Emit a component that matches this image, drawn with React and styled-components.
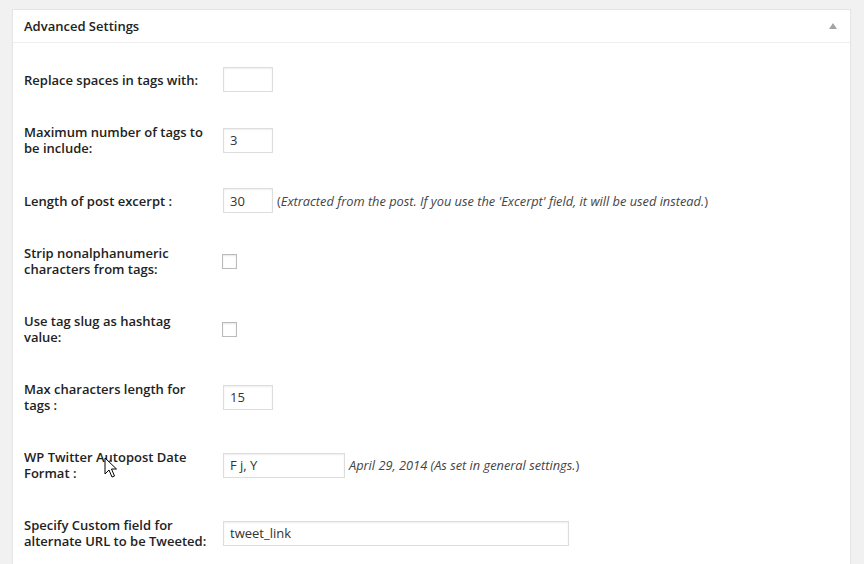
import React from "react";
import styled, { createGlobalStyle } from "styled-components";

const GlobalStyle = createGlobalStyle`
  html, body {
    margin: 0;
    padding: 0;
    background: #f1f1f1;
    font-family: "Open Sans", "Liberation Sans", sans-serif;
    color: #444;
  }
`;

const Page = styled.div`
  padding: 9px 13px 0 12px;
`;

const Panel = styled.div`
  background: #fff;
  border: 1px solid #e5e5e5;
  box-shadow: 0 1px 1px rgba(0, 0, 0, 0.04);
`;

const PanelHeader = styled.div`
  display: flex;
  align-items: center;
  justify-content: space-between;
  padding: 7px 13px 7px 11px;
  border-bottom: 1px solid #eee;
`;

const PanelTitle = styled.h3`
  margin: 0;
  font-size: 13px;
  line-height: 18px;
  font-weight: 600;
  color: #222;
`;

const Toggle = styled.span`
  width: 0;
  height: 0;
  border-left: 4px solid transparent;
  border-right: 4px solid transparent;
  border-bottom: 6px solid #a0a5aa;
`;

const PanelBody = styled.div`
  padding: 10px 11px 20px 11px;
  position: relative;
`;

const Row = styled.div`
  display: grid;
  grid-template-columns: 199px 1fr;
  align-items: center;
`;

const Label = styled.div`
  padding: 18px 16px 18px 0;
  font-size: 13px;
  line-height: 16px;
  font-weight: 600;
  color: #222;
`;

const Field = styled.div`
  display: flex;
  align-items: center;
  gap: 4px;
  padding: 14px 0;
  font-size: 13px;
  color: #444;
`;

const TextInput = styled.input`
  box-sizing: border-box;
  width: ${(p) => p.$width}px;
  height: 25px;
  margin: 0;
  padding: 0 6px;
  border: 1px solid #ddd;
  border-radius: 0;
  box-shadow: inset 0 1px 2px rgba(0, 0, 0, 0.07);
  background: #fff;
  font-family: "Open Sans", "Liberation Sans", sans-serif;
  font-size: 13px;
  color: #333;
  outline: none;
`;

const CheckBox = styled.input`
  appearance: none;
  box-sizing: border-box;
  width: 15px;
  height: 15px;
  margin: 0 0 0 -1px;
  border: 1px solid #bbb;
  background: #fff;
  box-shadow: inset 0 1px 2px rgba(0, 0, 0, 0.1);
`;

const Note = styled.span`
  color: #444;
  font-size: 12.8px;
`;

const Em = styled.i`
  font-style: italic;
`;

const Cursor = styled.svg`
  position: absolute;
  left: 91px;
  top: 414px;
  width: 13px;
  height: 21px;
`;

const rows = [
  { label: "Replace spaces in tags with:", kind: "text", width: 50, value: "" },
  { label: "Maximum number of tags to be include:", kind: "text", width: 50, value: "3" },
  {
    label: "Length of post excerpt :",
    kind: "text",
    width: 50,
    value: "30",
    note: (
      <Note>
        (<Em>Extracted from the post. If you use the 'Excerpt' field, it will be used instead.</Em>)
      </Note>
    ),
  },
  { label: "Strip nonalphanumeric characters from tags:", kind: "check" },
  { label: "Use tag slug as hashtag value:", kind: "check" },
  { label: "Max characters length for tags :", kind: "text", width: 50, value: "15" },
  {
    label: "WP Twitter Autopost Date Format :",
    kind: "text",
    width: 122,
    value: "F j, Y",
    note: (
      <Note>
        <Em>April 29, 2014 (As set in general settings.</Em>)
      </Note>
    ),
  },
  {
    label: "Specify Custom field for alternate URL to be Tweeted:",
    kind: "text",
    width: 346,
    value: "tweet_link",
  },
];

export default function App() {
  return (
    <>
      <GlobalStyle />
      <Page>
        <Panel>
          <PanelHeader>
            <PanelTitle>Advanced Settings</PanelTitle>
            <Toggle />
          </PanelHeader>
          <PanelBody>
            {rows.map((r) => (
              <Row key={r.label}>
                <Label>{r.label}</Label>
                <Field>
                  {r.kind === "check" ? (
                    <CheckBox type="checkbox" readOnly />
                  ) : (
                    <TextInput $width={r.width} defaultValue={r.value} readOnly />
                  )}
                  {r.note}
                </Field>
              </Row>
            ))}
            <Cursor viewBox="0 0 13 21">
              <path
                d="M1 1 L1 17 L5 13 L8 20 L10.5 19 L7.5 12 L12.5 12 Z"
                fill="#fff"
                stroke="#000"
                strokeWidth="1"
                strokeLinejoin="miter"
              />
            </Cursor>
          </PanelBody>
        </Panel>
      </Page>
    </>
  );
}
